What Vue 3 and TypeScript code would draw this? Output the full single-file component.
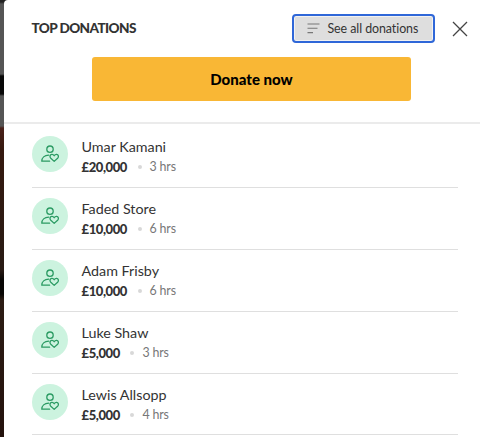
<script setup lang="ts">
interface Donation {
  name: string
  amount: string
  time: string
}

const donations: Donation[] = [
  { name: 'Umar Kamani', amount: '£20,000', time: '3 hrs' },
  { name: 'Faded Store', amount: '£10,000', time: '6 hrs' },
  { name: 'Adam Frisby', amount: '£10,000', time: '6 hrs' },
  { name: 'Luke Shaw', amount: '£5,000', time: '3 hrs' },
  { name: 'Lewis Allsopp', amount: '£5,000', time: '4 hrs' },
]
</script>

<template>
  <div class="backdrop">
    <section class="modal">
      <header class="head">
        <div class="bar">
          <h2 class="title">TOP DONATIONS</h2>
          <button class="see-all" type="button">
            <svg class="lines" viewBox="0 0 13 11" fill="none" stroke="#777" stroke-width="1.1">
              <path d="M0.5 1H12.5M0.5 5.3H10.5M0.5 9.6H6" />
            </svg>
            <span>See all donations</span>
          </button>
          <button class="close" type="button" aria-label="Close">
            <svg viewBox="0 0 16 16" fill="none" stroke="#444" stroke-width="1.3">
              <path d="M1 1L15 15M15 1L1 15" />
            </svg>
          </button>
        </div>
        <button class="donate" type="button">Donate now</button>
      </header>
      <ul class="list">
        <li v-for="d in donations" :key="d.name" class="row">
          <span class="avatar">
            <svg viewBox="0 0 18 18" fill="none" stroke="#2b9b63" stroke-width="1.3" stroke-linecap="round" stroke-linejoin="round">
              <circle cx="9" cy="4.2" r="3.2" />
              <path d="M8.6 16.2H0.8C0.8 12.8 3.4 10.2 7.8 10.1" />
              <path d="M13.2 16.4L9.8 13.2C8.3 11.6 9.1 9.7 10.8 9.4C11.9 9.3 12.7 9.9 13.2 10.8C13.7 9.9 14.5 9.3 15.6 9.4C17.3 9.7 18.1 11.6 16.6 13.2Z" />
            </svg>
          </span>
          <div class="info">
            <div class="name">{{ d.name }}</div>
            <div class="meta">
              <strong class="amount">{{ d.amount }}</strong>
              <i class="dot"></i>
              <span class="time">{{ d.time }}</span>
            </div>
          </div>
        </li>
      </ul>
    </section>
  </div>
</template>

<style>
body {
  margin: 0;
  overflow: hidden;
}
</style>

<style scoped>
.backdrop {
  box-sizing: border-box;
  height: 437px;
  padding-left: 3.5px;
  overflow: hidden;
  background: linear-gradient(#222 0 2px, #555 4px 74px, #080808 76px 94px, #555 96px 126px, #4a211a 128px, #35190f 150px, #281a14 270px, #080604 280px 294px, #2c1c14 300px, #24120d 437px);
  font-family: Lato, "Liberation Sans", sans-serif;
  color: #333;
}
.modal {
  height: 437px;
  background: #fff;
  border-top-left-radius: 4px;
  overflow: hidden;
}
.head {
  box-sizing: border-box;
  height: 124px;
  border-bottom: 2px solid #ebebeb;
}
.bar {
  display: flex;
  align-items: center;
  height: 57px;
  padding: 0 12.5px 0 28px;
}
button {
  font-family: inherit;
  border: 0;
  padding: 0;
}
.title {
  margin: 0 auto 2px 0;
  font-size: 13.6px;
  font-weight: 900;
  line-height: 20px;
  letter-spacing: -0.6px;
}
.see-all {
  box-sizing: border-box;
  display: flex;
  align-items: center;
  gap: 8px;
  width: 143px;
  height: 29px;
  padding-left: 13px;
  border: 2px solid #2f67d8;
  border-radius: 4px;
  background: #dedede;
  box-shadow: inset 0 0 0 1px #f1f1f1;
  color: #333;
  font-size: 12.4px;
  font-variant-ligatures: none;
  letter-spacing: -0.06px;
  white-space: nowrap;
}
.lines {
  width: 13px;
  height: 11px;
}
.close {
  width: 16px;
  height: 16px;
  margin-left: 17px;
  background: none;
}
.close svg {
  display: block;
}
.donate {
  display: block;
  width: 319px;
  height: 44px;
  margin-left: 88.5px;
  border-radius: 3px;
  background: #f9b735;
  color: #000;
  font-size: 15px;
  font-weight: 900;
}
.list {
  margin: 0;
  padding: 2px 22px 0 28px;
  list-style: none;
}
.row {
  box-sizing: border-box;
  display: flex;
  gap: 14px;
  height: 61.9px;
  padding-top: 10px;
  border-bottom: 1px solid #dfdfdf;
}
.avatar {
  display: flex;
  align-items: center;
  justify-content: center;
  width: 36px;
  height: 36px;
  border-radius: 50%;
  background: #ccf3df;
}
.avatar svg {
  width: 18px;
  height: 18px;
}
.name {
  height: 21px;
  font-size: 14.3px;
  line-height: 22px;
}
.meta {
  display: flex;
  align-items: center;
  height: 20px;
  line-height: 20px;
}
.amount {
  font-size: 13px;
  font-weight: 900;
  letter-spacing: -0.4px;
}
.dot {
  width: 4px;
  height: 4px;
  margin: 0 8px 0 10.5px;
  border-radius: 50%;
  background: #d8d8d8;
}
.time {
  font-size: 12.4px;
  letter-spacing: -0.15px;
  color: #777;
}
</style>
